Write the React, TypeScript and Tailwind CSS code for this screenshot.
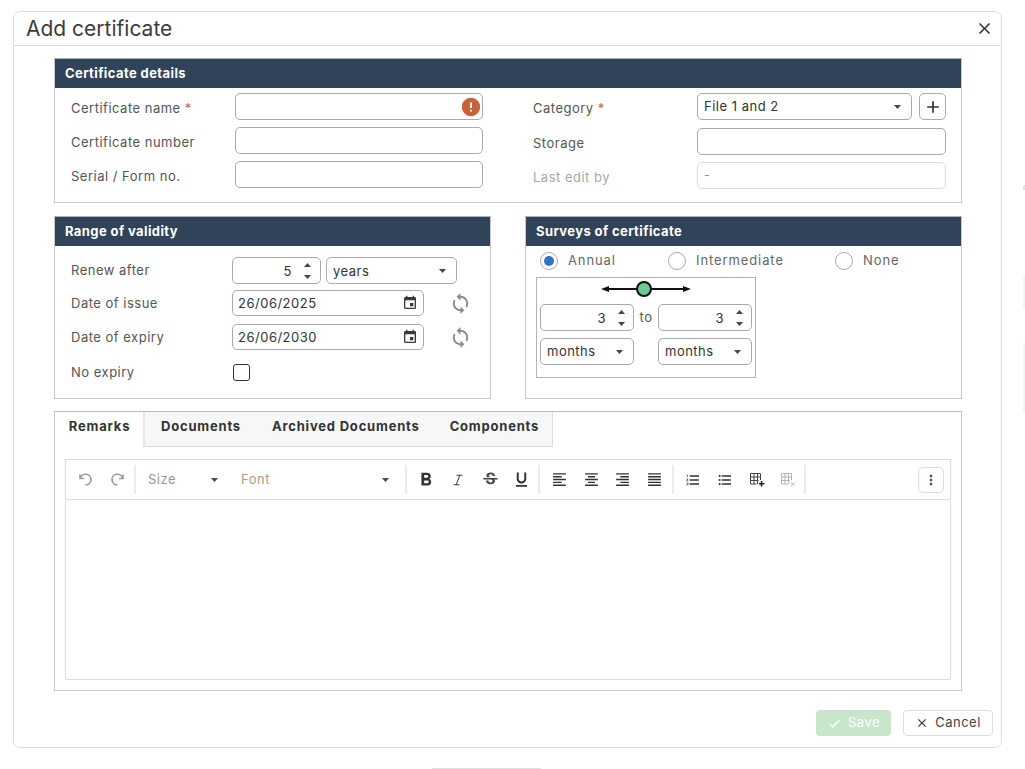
import React from "react";
import {
  MdClose, MdAdd, MdError, MdEvent, MdSync,
  MdFormatBold, MdStrikethroughS, MdFormatUnderlined,
  MdFormatAlignLeft, MdFormatAlignCenter, MdFormatAlignRight, MdFormatAlignJustify,
  MdFormatListNumbered, MdFormatListBulleted, MdMoreVert, MdCheck,
} from "react-icons/md";
import { Italic } from "lucide-react";

const inputBase = "h-[27px] rounded-[5px] border border-[#aaaaaa] bg-white flex items-center text-[13px] text-[#333333]";

function Caret() {
  return <svg width="7" height="4" viewBox="0 0 7 4" className="shrink-0"><path d="M0 0h7L3.500 4z" fill="#444" /></svg>;
}

function Select({ value, w, pb = "" }: { value: string; w: string; pb?: string }) {
  return (
    <div className={`${inputBase} ${w} pl-[6px] pr-[10px] justify-between`}>
      <span className={pb}>{value}</span>
      <Caret />
    </div>
  );
}

function NumberInput({ value, w, numW }: { value: string; w: string; numW: string }) {
  return (
    <div className={`${inputBase} ${w} justify-start`}>
      <span className={`${numW} text-right pt-[2px]`}>{value}</span>
      <span className="ml-[12px] flex flex-col gap-[8px]">
        <svg width="7" height="4" viewBox="0 0 7 4"><path d="M0 4h7L3.500 0z" fill="#444" /></svg>
        <svg width="7" height="4" viewBox="0 0 7 4"><path d="M0 0h7L3.500 4z" fill="#444" /></svg>
      </span>
    </div>
  );
}

function Section({ title, className, children }: { title: string; className: string; children: React.ReactNode }) {
  return (
    <section className={`border border-[#c8c8c8] border-t-[#aab2ba] ${className}`}>
      <div className="h-[29px] bg-[#304358] flex items-center pl-[10px] text-white font-bold text-[13px] tracking-[0.4px]">{title}</div>
      {children}
    </section>
  );
}

function Label({ children, className = "" }: { children: React.ReactNode; className?: string }) {
  return <div className={`text-[13px] text-[#555555] ${className}`}>{children}</div>;
}

function DateRow({ label, value }: { label: string; value: string }) {
  return (
    <div className="flex items-center h-[26px]">
      <Label className="w-[161px] pt-[2px]">{label}</Label>
      <div className={`${inputBase} !h-[26px] w-[192px] pl-[5px] pr-[5px] justify-between`}>
        <span className="pt-[2px]">{value}</span>
        <MdEvent size={16} color="#3a3a3a" />
      </div>
      <MdSync size={23} color="#8a8a8a" className="ml-[25px]" />
    </div>
  );
}

function Radio({ checked, label, className }: { checked?: boolean; label: string; className: string }) {
  return (
    <div className={`flex items-center ${className}`}>
      <span className="w-[18px] h-[18px] rounded-full border border-[#aaaaaa] flex items-center justify-center">
        {checked && <span className="w-[10px] h-[10px] rounded-full bg-[#2f72c4]" />}
      </span>
      <span className="ml-[10px] text-[13px] text-[#666666] tracking-[0.9px]">{label}</span>
    </div>
  );
}

function TableIcon({ muted }: { muted?: boolean }) {
  const c = muted ? "#b4b4b4" : "#444";
  return (
    <svg width="15" height="15" viewBox="0 0 15 15" fill="none" stroke={c} strokeWidth="1">
      <path d="M.500 1.500h10M.500 5h10M.500 8.500h8M.500 12h6M.500 1.500V12M4 1.500V12M7.500 1.500V12M10.500 1.500V8" />
      {muted
        ? <path d="M10 10.500l3.500 3.500M13.500 10.500L10 14" />
        : <path d="M11.500 9v5.500M9 11.700h5.500" strokeWidth="1.600" stroke="#222" />}
    </svg>
  );
}

function HookArrow({ flip }: { flip?: boolean }) {
  return (
    <svg width="15" height="15" viewBox="0 0 15 15" fill="none" stroke="#9a9a9a" strokeWidth="1.600" className={flip ? "-scale-x-100" : ""}>
      <path d="M2 2.500v4h4" />
      <path d="M2.300 6.300A5.400 5.400 0 1 1 7.500 13" />
    </svg>
  );
}

function Sep({ className = "" }: { className?: string }) {
  return <span className={`w-[2px] h-[29px] bg-[#ececec] shrink-0 ${className}`} />;
}

function Tool({ children, ml }: { children: React.ReactNode; ml: string }) {
  return <span className={`w-[16px] h-[16px] flex items-center justify-center shrink-0 [&>svg]:shrink-0 ${ml}`}>{children}</span>;
}

export default function App() {
  return (
    <div className="relative w-[1025px] h-[769px] overflow-hidden bg-white pl-[13px] pt-[11px] tracking-[0.5px]" style={{ fontFamily: 'Inter, "Open Sans", sans-serif' }}>
      <div className="w-[989px] h-[737px] rounded-[7px] border border-[#dddddd] bg-white flex flex-col">
        <header className="h-[34px] shrink-0 border-b border-[#dddddd] flex items-center justify-between pl-[12px] pr-[7px]">
          <h1 className="text-[21px] font-normal text-[#3c3c3c] leading-none tracking-[0px]">Add certificate</h1>
          <MdClose size={19} color="#333" />
        </header>

        <div className="flex-1 pl-[40px] pt-[12px] w-[948px]">
          <Section title="Certificate details" className="h-[145px]">
            <div className="flex pt-[5px]">
              <div className="w-[430px] flex flex-col gap-[7px]">
                <div className="flex items-center">
                  <Label className="w-[180px] pl-[16px] pt-[4px]">Certificate name <span className="text-[#d2622a]">*</span></Label>
                  <div className={`${inputBase} w-[248px] justify-end`}>
                    <MdError size={22} color="#c8623c" />
                  </div>
                </div>
                <div className="flex items-center">
                  <Label className="w-[180px] pl-[16px] pt-[4px]">Certificate number</Label>
                  <div className={`${inputBase} w-[248px]`} />
                </div>
                <div className="flex items-center">
                  <Label className="w-[180px] pl-[16px] pt-[4px]">Serial / Form no.</Label>
                  <div className={`${inputBase} w-[248px]`} />
                </div>
              </div>
              <div className="ml-[48px] flex flex-col">
                <div className="flex items-center">
                  <Label className="w-[164px] pt-[4px]">Category <span className="text-[#d2622a]">*</span></Label>
                  <Select value="File 1 and 2" w="w-[215px]" />
                  <div className="ml-[7px] w-[27px] h-[27px] rounded-[5px] border border-[#aaaaaa] flex items-center justify-center">
                    <MdAdd size={20} color="#333" />
                  </div>
                </div>
                <div className="flex items-center mt-[8px]">
                  <Label className="w-[164px] pt-[4px]">Storage</Label>
                  <div className={`${inputBase} w-[249px]`} />
                </div>
                <div className="flex items-center mt-[7px]">
                  <Label className="w-[164px] !text-[#a8a8a8] pt-[4px]">Last edit by</Label>
                  <div className={`${inputBase} !border-[#dddddd] !text-[#999999] w-[249px] pl-[6px]`}>-</div>
                </div>
              </div>
            </div>
          </Section>

          <div className="flex justify-between mt-[13px]">
            <Section title="Range of validity" className="w-[437px] h-[183px]">
              <div className="pl-[16px] pt-[11px] flex flex-col">
                <div className="flex items-center">
                  <Label className="w-[161px]">Renew after</Label>
                  <NumberInput value="5" w="w-[89px]" numW="w-[59px]" />
                  <Select value="years" w="w-[131px] ml-[5px]" pb="pt-[2px]" />
                </div>
                <div className="mt-[6px] flex flex-col gap-[8px]">
                  <DateRow label="Date of issue" value="26/06/2025" />
                  <DateRow label="Date of expiry" value="26/06/2030" />
                </div>
                <div className="flex items-center mt-[13px]">
                  <Label className="w-[162px]">No expiry</Label>
                  <span className="w-[17px] h-[17px] rounded-[3px] border border-[#333333]" />
                </div>
              </div>
            </Section>

            <Section title="Surveys of certificate" className="w-[437px] h-[183px]">
              <div className="flex items-center pl-[14px] pt-[5px] h-[24px]">
                <Radio checked label="Annual" className="w-[128px]" />
                <Radio label="Intermediate" className="w-[167px]" />
                <Radio label="None" className="" />
              </div>
              <div className="ml-[10px] mt-[7px] w-[220px] h-[101px] border border-[#b4b4b4] flex flex-col items-center pt-[1px]">
                <svg width="90" height="20" viewBox="0 0 90 20" className="shrink-0">
                  <path d="M4 10h82" stroke="#111" strokeWidth="2" />
                  <path d="M0 10l8-3v6zM90 10l-8-3v6z" fill="#111" />
                  <circle cx="43" cy="10" r="7" fill="#6cc793" stroke="#111" strokeWidth="2" />
                </svg>
                <div className="mt-[5px] w-[212px] flex items-center justify-between">
                  <NumberInput value="3" w="w-[94px]" numW="w-[65px]" />
                  <span className="text-[13px] text-[#555555]">to</span>
                  <NumberInput value="3" w="w-[94px]" numW="w-[65px]" />
                </div>
                <div className="mt-[7px] w-[212px] flex items-center justify-between">
                  <Select value="months" w="w-[94px]" />
                  <Select value="months" w="w-[94px]" />
                </div>
              </div>
            </Section>
          </div>

          <div className="mt-[12px] h-[280px] border border-[#c8c8c8] border-t-[#b4bcc0]">
            <div className="flex h-[35px] w-[498px] border-b border-r border-[#dddddd] bg-[#f7f7f7] text-[13px] font-bold text-[#333333] tracking-[0.8px]">
              <div className="w-[90px] bg-white border-r-2 border-[#e6e6e6] -mb-px flex items-center justify-center pb-[5px] pl-[1px]">Remarks</div>
              <div className="flex items-center pl-[16px] pb-[4px]">Documents</div>
              <div className="flex items-center pl-[31px] pb-[4px]">Archived Documents</div>
              <div className="flex items-center pl-[30px] pb-[4px]">Components</div>
            </div>
            <div className="ml-[10px] mt-[12px] w-[886px] h-[221px] border border-[#dddddd]">
              <div className="h-[40px] border-b border-[#dddddd] flex items-center pl-[11px] text-[#444444]">
                <Tool ml=""><HookArrow /></Tool>
                <Tool ml="ml-[16px]"><HookArrow flip /></Tool>
                <Sep className="ml-[9px]" />
                <div className="w-[83px] pl-[12px] pr-[1px] flex items-center justify-between text-[13px] text-[#999999]"><span>Size</span><Caret /></div>
                <div className="w-[176px] pl-[22px] pr-[6px] flex items-center justify-between text-[13px] text-[#b09a80]"><span>Font</span><Caret /></div>
                <Sep className="ml-[10px]" />
                <Tool ml="ml-[11px]"><MdFormatBold size={22} color="#333" /></Tool>
                <Tool ml="ml-[16px]"><Italic size={14} color="#444" strokeWidth={1.8} /></Tool>
                <Tool ml="ml-[16px]"><MdStrikethroughS size={19} color="#444" /></Tool>
                <Tool ml="ml-[15px]"><MdFormatUnderlined size={19} color="#333" /></Tool>
                <Sep className="ml-[9px]" />
                <Tool ml="ml-[11px]"><MdFormatAlignLeft size={17} color="#333" /></Tool>
                <Tool ml="ml-[16px]"><MdFormatAlignCenter size={17} color="#333" /></Tool>
                <Tool ml="ml-[15px]"><MdFormatAlignRight size={17} color="#333" /></Tool>
                <Tool ml="ml-[16px]"><MdFormatAlignJustify size={17} color="#333" /></Tool>
                <Sep className="ml-[10px]" />
                <Tool ml="ml-[11px]"><MdFormatListNumbered size={16} color="#333" /></Tool>
                <Tool ml="ml-[16px]"><MdFormatListBulleted size={16} color="#333" /></Tool>
                <Tool ml="ml-[16px]"><TableIcon /></Tool>
                <Tool ml="ml-[15px]"><TableIcon muted /></Tool>
                <Sep className="ml-[8px]" />
                <div className="ml-[112px] w-[26px] h-[26px] rounded-[5px] border border-[#dddddd] flex items-center justify-center">
                  <MdMoreVert size={16} color="#33556f" />
                </div>
              </div>
            </div>
          </div>
        </div>

        <footer className="h-[37px] shrink-0 flex justify-end pr-[8px] gap-[12px]">
          <div className="w-[75px] h-[26px] rounded-[4px] bg-[#c8e6c9] flex items-center justify-center gap-[6px] text-[13px] text-white">
            <MdCheck size={15} color="#fff" />Save
          </div>
          <div className="w-[90px] h-[26px] rounded-[4px] border border-[#dddddd] flex items-center justify-center gap-[6px] text-[13px] text-[#444444]">
            <MdClose size={14} color="#333" />Cancel
          </div>
        </footer>
      </div>
      <div className="absolute left-[432px] top-[768px] w-[109px] h-[1px] bg-[#e0e0e0]" />
      <div className="absolute left-[1023px] top-[185px] w-[2px] h-[5px] bg-[#e4e4e4]" />
      <div className="absolute left-[1023px] top-[276px] w-[2px] h-[33px] bg-[#f4f4f4]" />
      <div className="absolute left-[1023px] top-[343px] w-[2px] h-[70px] bg-[#f4f4f4]" />
    </div>
  );
}
